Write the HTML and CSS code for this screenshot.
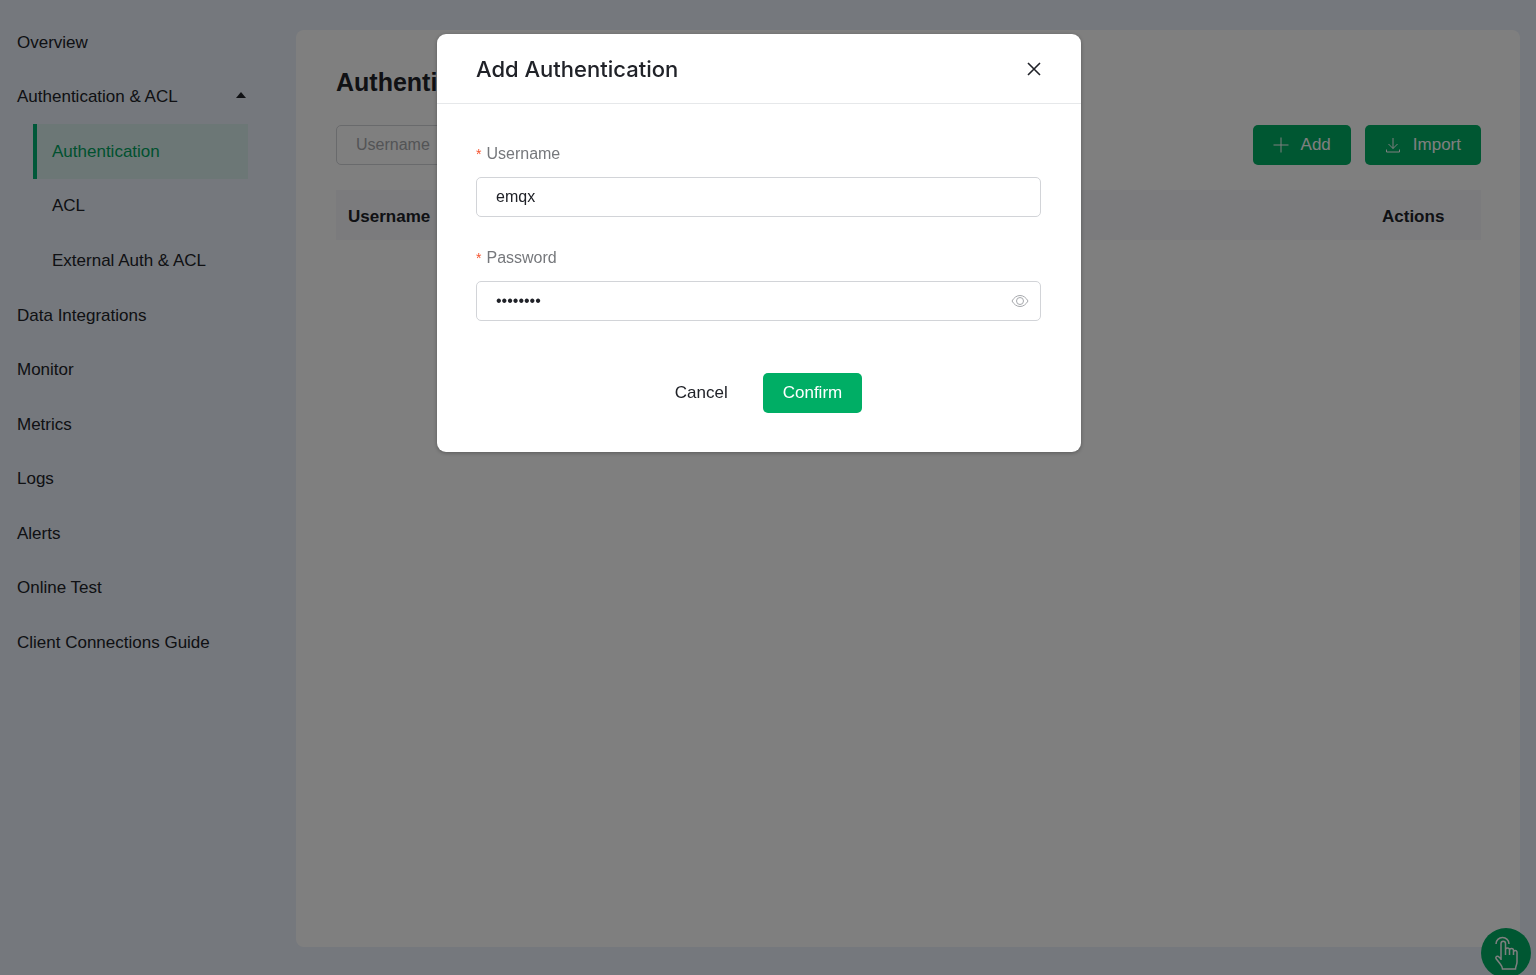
FILE: index.html
```html
<!DOCTYPE html>
<html lang="en">
<head>
	<meta charset="utf-8">
	<meta name="viewport" content="width=device-width">
	<title>Authentication</title>
	<link rel="stylesheet" href="styles.css">
</head>
<body>

	<div class="layout">
		<nav class="sidebar">
			<ul class="menu">
				<li><a href="#">Overview</a></li>
				<li>
					<a href="#" class="expanded">Authentication &amp; ACL
						<svg class="caret" viewBox="0 0 10 6"><polygon points="5,0 10,6 0,6"/></svg>
					</a>
					<ul class="submenu">
						<li><a href="#" class="active">Authentication</a></li>
						<li><a href="#">ACL</a></li>
						<li><a href="#">External Auth &amp; ACL</a></li>
					</ul>
				</li>
				<li><a href="#">Data Integrations</a></li>
				<li><a href="#">Monitor</a></li>
				<li><a href="#">Metrics</a></li>
				<li><a href="#">Logs</a></li>
				<li><a href="#">Alerts</a></li>
				<li><a href="#">Online Test</a></li>
				<li><a href="#">Client Connections Guide</a></li>
			</ul>
		</nav>

		<main class="panel">
			<h1>Authentication</h1>

			<div class="toolbar">
				<input type="text" class="input search" placeholder="Username" aria-label="Search by username">
				<div class="toolbar-actions">
					<button type="button" class="button primary">
						<svg class="icon" viewBox="0 0 16 16"><path d="M8 0.500v15M0.500 8h15"/></svg>
						Add
					</button>
					<button type="button" class="button primary">
						<svg class="icon" viewBox="0 0 16 16"><path d="M8 1v10.500M3.500 7 8 11.500 12.500 7M1.500 12.500V15h13v-2.500"/></svg>
						Import
					</button>
				</div>
			</div>

			<table class="table">
				<thead>
					<tr>
						<th>Username</th>
						<th class="actions">Actions</th>
					</tr>
				</thead>
			</table>
		</main>
	</div>

	<button type="button" class="guide" aria-label="Guide">
		<svg viewBox="0 0 24 36">
			<path d="M2 9a6.500 6.500 0 1 1 13 0"/>
			<path d="M7 25V8.500a2.200 2.200 0 0 1 4.500 0V20M11.500 15a2 2 0 0 1 4 0v5M15.500 15.500a2 2 0 0 1 4 0V20M19.500 17a1.800 1.800 0 0 1 3.500 0v10c0 3-1.500 4-1.500 7H8.500c0-3-1.500-4-3-6L2 23.500c-.800-2 1.500-3 3-1.500l2 2"/>
		</svg>
	</button>

	<div class="overlay">
		<div class="dialog" role="dialog" aria-modal="true" aria-labelledby="dialog-title">
			<header class="dialog-header">
				<h2 id="dialog-title">Add Authentication</h2>
				<button type="button" class="close" aria-label="Close">
					<svg viewBox="0 0 14 14"><path d="M1 1l12 12M13 1 1 13"/></svg>
				</button>
			</header>

			<form class="dialog-body">
				<div class="field">
					<label for="username">Username</label>
					<input type="text" id="username" class="input" value="emqx">
				</div>
				<div class="field">
					<label for="password">Password</label>
					<div class="password">
						<input type="password" id="password" class="input" value="emqx1234">
						<button type="button" class="reveal" aria-label="Show password">
							<svg viewBox="0 0 18 14">
								<path d="M1 7c2-3.500 4.800-5.500 8-5.500S15 3.500 17 7c-2 3.500-4.800 5.500-8 5.500S3 10.500 1 7z"/>
								<circle cx="9" cy="7" r="3.500"/>
							</svg>
						</button>
					</div>
				</div>
				<div class="dialog-actions">
					<button type="button" class="button">Cancel</button>
					<button type="submit" class="button primary">Confirm</button>
				</div>
			</form>
		</div>
	</div>

</body>
</html>
```

FILE: styles.css
```css
* {
	box-sizing: border-box;
	padding: 0;
	margin: 0;
	font-family: inherit;
}

body {
	background-color: #EBF1FA;
	color: #202228;
	font-family: "Liberation Sans", Arial, sans-serif;
	font-size: 17px;
	line-height: 20px;
}

ul {
	list-style: none;
}

a {
	color: inherit;
	text-decoration: none;
}

button {
	border: 0;
	background: none;
	color: inherit;
	cursor: pointer;
}

svg {
	display: block;
	fill: none;
	stroke: currentColor;
}

.layout {
	display: flex;
	min-height: 100vh;
	padding: 30px 16px 28px 0;
}

/* Sidebar */

.sidebar {
	flex: 0 0 296px;
	padding: 0 48px 0 17px;
	margin-top: -15px;
}

.menu a {
	display: flex;
	justify-content: space-between;
	align-items: center;
	height: 54px;
}
.menu li:nth-child(odd) > a {
	height: 55px;
}

.caret {
	width: 10px;
	height: 6px;
	margin: 0 2px 4px 0;
	fill: currentColor;
	stroke: none;
}

.submenu {
	margin-left: 16px;
}

.submenu a {
	padding-left: 15px;
	border-left: 4px solid transparent;
}
.submenu a.active {
	border-left-color: #00B173;
	background-color: #D8EFEC;
	color: #00A35F;
}

/* Content */

.panel {
	flex: 1;
	padding: 36px 39px 40px 40px;
	border-radius: 8px;
	background-color: #FFF;
}

h1 {
	font-size: 25px;
	line-height: 32px;
}

.toolbar {
	display: flex;
	justify-content: space-between;
	margin: 27px 0 25px;
}

.toolbar-actions {
	display: flex;
	gap: 14px;
}

.input {
	display: block;
	width: 100%;
	height: 40px;
	padding: 0 19px;
	border: 1px solid #D2D4D8;
	border-radius: 5px;
	background-color: #FFF;
	color: #202228;
	font-size: 16px;
	outline: none;
}
.input::placeholder {
	color: #A6A8AC;
}
.search {
	width: 240px;
}

.button {
	display: flex;
	align-items: center;
	gap: 12px;
	height: 40px;
	padding: 0 20px;
	border-radius: 5px;
	font-size: 17px;
	line-height: 20px;
}
.button.primary {
	background-color: #00AE65;
	color: #FFF;
}

.icon {
	width: 16px;
	height: 16px;
}

.table {
	width: 100%;
	border-collapse: collapse;
}
.table th {
	height: 50px;
	padding: 3px 12px 0;
	background-color: #F6F7FB;
	font-size: 17px;
	text-align: left;
}
.table .actions {
	width: 111px;
}

.guide {
	position: fixed;
	right: 5px;
	bottom: -3px;
	display: flex;
	justify-content: center;
	align-items: center;
	width: 50px;
	height: 50px;
	border-radius: 50%;
	background-color: #00AE65;
	color: #FFF;
}
.guide svg {
	width: 24px;
	height: 36px;
	stroke-width: 1.5;
}

/* Dialog */

.overlay {
	position: fixed;
	top: 0;
	right: 0;
	bottom: 0;
	left: 0;
	padding: 34px 18px 0 0;
	background-color: rgba(0, 0, 0, .5);
}

.dialog {
	width: 644px;
	max-width: 100%;
	margin: 0 auto;
	border-radius: 9px;
	background-color: #FFF;
	box-shadow: 0 1px 4px rgba(0, 0, 0, .3);
}

.dialog-header {
	display: flex;
	justify-content: space-between;
	align-items: center;
	height: 70px;
	padding: 0 40px 0 39px;
	border-bottom: 1px solid #E6E8EA;
}
.dialog-header h2 {
	font-family: Inter, "Liberation Sans", sans-serif;
	font-size: 22px;
	font-weight: 500;
	line-height: 28px;
}

.close svg {
	width: 14px;
	height: 14px;
	stroke-width: 1.6;
}

.dialog-body {
	padding: 40px 40px 39px 39px;
}

.field {
	margin-bottom: 31px;
}

.field label {
	display: block;
	margin-bottom: 13px;
	color: #76787C;
	font-size: 16px;
	line-height: 20px;
}
.field label::before {
	content: "*";
	margin-right: 5px;
	color: #F5522D;
	font-size: 14px;
}

.password {
	position: relative;
}

.reveal {
	position: absolute;
	top: 13px;
	right: 12px;
	color: #A6A8AC;
}
.reveal svg {
	width: 18px;
	height: 14px;
}

.dialog-actions {
	display: flex;
	justify-content: center;
	gap: 15px;
	padding-top: 21px;
}
```
